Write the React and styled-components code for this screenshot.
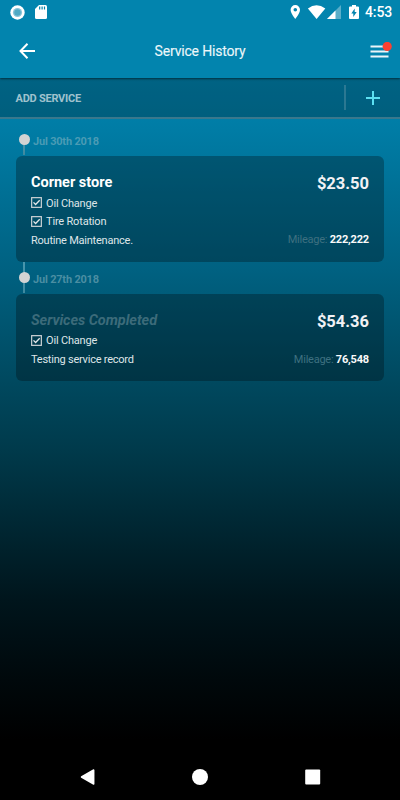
import React from "react";
import styled, { createGlobalStyle } from "styled-components";

const Global = createGlobalStyle`
  * { box-sizing: border-box; }
  body { margin: 0; background: #000; }
`;

const Screen = styled.div`
  width: 400px;
  height: 800px;
  display: flex;
  flex-direction: column;
  overflow: hidden;
  font-family: Roboto, "Liberation Sans", sans-serif;
  color: #fff;
  background: linear-gradient(180deg, #0084b0 78px, #007ca5 130px, #006181 270px, #00485e 385px, #003a4b 450px, #00212b 550px, #00151c 600px, #00080b 680px, #000 740px);
`;

const TopArea = styled.header`
  height: 78px;
  flex: none;
  background: #0284ae;
  box-shadow: 0 1px 2px rgba(0, 0, 0, 0.55);
  z-index: 1;
`;

const StatusBar = styled.div`
  height: 24px;
  display: flex;
  align-items: center;
  justify-content: space-between;
  padding: 0 8px 0 10px;
`;

const StatusGroup = styled.div`
  display: flex;
  align-items: center;
`;

const Icon = styled.svg`
  display: block;
  flex: none;
  margin-left: ${(p) => p.$gap || 0}px;
`;

const Clock = styled.span`
  font-size: 14px;
  line-height: 24px;
  font-weight: 500;
  width: 27px;
  margin-left: 6px;
  white-space: nowrap;
  letter-spacing: -0.1px;
`;

const NavBar = styled.div`
  height: 54px;
  display: grid;
  grid-template-columns: 54px 1fr 54px;
  align-items: center;
`;

const IconButton = styled.button`
  border: 0;
  padding: 0;
  background: none;
  display: flex;
  align-items: center;
  justify-content: center;
`;

const Title = styled.h1`
  margin: 0;
  text-align: center;
  font-size: 14px;
  line-height: 20px;
  font-weight: 400;
  letter-spacing: -0.18px;
  color: #edf7fa;
  -webkit-text-stroke: 0.1px #edf7fa;
`;

const AddBar = styled.div`
  height: 41px;
  flex: none;
  display: flex;
  align-items: center;
  background: rgba(0, 0, 0, 0.25);
  border-bottom: 2px solid rgba(170, 170, 170, 0.34);
  padding-left: 15.5px;
`;

const AddLabel = styled.span`
  flex: 1;
  padding-top: 1px;
  font-size: 11px;
  font-weight: 700;
  letter-spacing: -0.25px;
  color: #9fc2ce;
`;

const Divider = styled.span`
  width: 2px;
  height: 25px;
  background: rgba(170, 190, 200, 0.25);
`;

const AddButton = styled(IconButton)`
  width: 54px;
  height: 39px;
`;

const Timeline = styled.main`
  flex: 1;
  padding: 5px 16px 0;
`;

const DateRow = styled.div`
  height: 32px;
  display: flex;
  align-items: center;
  padding-left: 3px;
`;

const Rail = styled.div`
  width: 11px;
  height: 32px;
  display: flex;
  align-items: flex-start;
  padding-top: 10px;
  background: linear-gradient(#4a96ad, #3f899f) 4px ${(p) => (p.$first ? "16px" : "0")} / 2px ${(p) => (p.$first ? "15px" : "31px")} no-repeat;
`;

const Dot = styled.span`
  width: 11px;
  height: 11px;
  border-radius: 50%;
  background: #d3d3d3;
`;

const DateText = styled.time`
  margin: 3px 0 0 3px;
  font-size: 11px;
  line-height: 14px;
  font-weight: 700;
  letter-spacing: -0.2px;
  color: rgba(150, 190, 200, 0.5);
`;

const Card = styled.article`
  height: ${(p) => p.$height}px;
  display: flex;
  justify-content: space-between;
  padding: 17px 15px 13px;
  border-radius: 6px;
  background: rgba(0, 0, 0, 0.28);
`;

const Details = styled.div`
  display: flex;
  flex-direction: column;
`;

const Totals = styled(Details)`
  align-items: flex-end;
  justify-content: space-between;
`;

const Shop = styled.h2`
  margin: 0;
  height: 21px;
  font-size: 14.5px;
  line-height: 20px;
  font-weight: 700;
  font-style: ${(p) => (p.$placeholder ? "italic" : "normal")};
  letter-spacing: ${(p) => (p.$placeholder ? "-0.05px" : "0")};
  color: ${(p) => (p.$placeholder ? "#3c6b7a" : "#fff")};
`;

const Line = styled.div`
  height: 18.5px;
  flex: none;
  display: flex;
  align-items: center;
  gap: 4px;
  font-size: 11px;
  line-height: 18px;
  letter-spacing: -0.25px;
  color: #dfe5e8;
`;

const LineText = styled.span`
  padding-top: 1.5px;
  letter-spacing: ${(p) => (p.$note ? "-0.23px" : "-0.18px")};
`;

const Price = styled.strong`
  font-size: 16.5px;
  line-height: 21px;
  font-weight: 700;
  color: #f2f2f5;
`;

const Mileage = styled(Line)`
  gap: 2.5px;
  margin-bottom: ${(p) => (p.$low ? "-1px" : "-0.5px")};
  color: #3e7080;
  strong { color: #fafafa; letter-spacing: -0.18px; }
`;

const SystemNav = styled.nav`
  height: 47px;
  flex: none;
  display: flex;
  justify-content: space-between;
  align-items: center;
  padding: 0 79px 0 80px;
  background: #000;
`;

const Checkbox = () => (
  <Icon width="11" height="11" viewBox="0 0 11 11" fill="none">
    <rect x=".65" y=".65" width="9.7" height="9.7" stroke="#cbd2d5" strokeWidth="1.2" />
    <path d="M2.5 5.4 4.6 7.5 8.7 3.3" stroke="#e4e9eb" strokeWidth="1.3" />
  </Icon>
);

const records = [
  { date: "Jul 30th 2018", shop: "Corner store", services: ["Oil Change", "Tire Rotation"], note: "Routine Maintenance.", price: "$23.50", mileage: "222,222", height: 106 },
  { date: "Jul 27th 2018", services: ["Oil Change"], note: "Testing service record", price: "$54.36", mileage: "76,548", height: 87 },
];

function ServiceRecord({ record, first }) {
  return (
    <section>
      <DateRow>
        <Rail $first={first}><Dot /></Rail>
        <DateText>{record.date}</DateText>
      </DateRow>
      <Card $height={record.height}>
        <Details>
          <Shop $placeholder={!record.shop}>{record.shop || "Services Completed"}</Shop>
          {record.services.map((s) => <Line key={s}><Checkbox /><LineText>{s}</LineText></Line>)}
          <Line><LineText $note>{record.note}</LineText></Line>
        </Details>
        <Totals>
          <Price>{record.price}</Price>
          <Mileage $low={!first}>Mileage: <strong>{record.mileage}</strong></Mileage>
        </Totals>
      </Card>
    </section>
  );
}

export default function App() {
  return (
    <>
      <Global />
      <Screen>
        <TopArea>
          <StatusBar>
            <StatusGroup>
              <Icon width="15" height="15" viewBox="0 0 15 15">
                <circle cx="7.5" cy="7.5" r="7.2" fill="#fff" />
                <circle cx="7.5" cy="7.5" r="4.6" fill="#8bc5d8" />
                <circle cx="7.5" cy="7.5" r="3.2" fill="#4ea9c4" />
              </Icon>
              <Icon $gap={10} width="12" height="14" viewBox="0 0 12 14">
                <path d="M4 0h6.5Q12 0 12 1.5v11q0 1.5-1.5 1.5h-9Q0 14 0 12.5V4Z" fill="#fff" />
                <path d="M4.7 1.6v3M7.1 1.6v3M9.5 1.6v3" stroke="#0284ae" strokeWidth="1.2" />
              </Icon>
            </StatusGroup>
            <StatusGroup>
              <Icon width="10" height="14" viewBox="0 0 10 14">
                <path fillRule="evenodd" d="M5.300 0a4.700 4.700 0 0 1 4.700 4.700c0 3.600-4.700 9.300-4.700 9.300S.6 8.300.6 4.700A4.700 4.700 0 0 1 5.300 0Zm0 3a1.800 1.800 0 1 0 0 3.600 1.800 1.800 0 0 0 0-3.600Z" fill="#fff" />
              </Icon>
              <Icon $gap={7} width="19" height="14" viewBox="0 0 19 14">
                <path d="M.9 3.500Q9.500-3 18.300 3.500L9.600 14Z" fill="#fff" />
              </Icon>
              <Icon $gap={1} width="14" height="14" viewBox="0 0 14 14">
                <path d="M14 0v14H0Z" fill="#5aaec9" />
                <path d="M8.500 5.500V14H0Z" fill="#fff" />
              </Icon>
              <Icon $gap={8} width="10" height="14" viewBox="0 0 10 14">
                <path d="M3 0h4v1.500h2q1 0 1 1V13q0 1-1 1H1q-1 0-1-1V2.500q0-1 1-1h2Z" fill="#fff" />
                <path d="M5.700 3.400v3.500h2L4.300 12V8.600h-2Z" fill="#0284ae" />
              </Icon>
              <Clock>4:53</Clock>
            </StatusGroup>
          </StatusBar>
          <NavBar>
            <IconButton aria-label="Back">
              <Icon width="16" height="16" viewBox="0 0 16 16" fill="none" stroke="#fff" strokeWidth="2">
                <path d="M8.500.8 1.500 8l7 7.200M1.500 8H16" />
              </Icon>
            </IconButton>
            <Title>Service History</Title>
            <IconButton aria-label="Menu">
              <Icon $gap={16} width="22" height="18" viewBox="0 0 22 18">
                <path d="M.5 4.500h18M.5 9.500h18M.5 14.500h18" stroke="#eaf5f9" strokeWidth="2" />
                <circle cx="17.200" cy="4.400" r="4.600" fill="#fa4132" />
              </Icon>
            </IconButton>
          </NavBar>
        </TopArea>
        <AddBar>
          <AddLabel>ADD SERVICE</AddLabel>
          <Divider />
          <AddButton aria-label="Add service">
            <Icon width="14" height="14" viewBox="0 0 14 14">
              <path d="M7 0v14M0 7h14" stroke="#5ce0f2" strokeWidth="2" />
            </Icon>
          </AddButton>
        </AddBar>
        <Timeline>
          {records.map((r, i) => <ServiceRecord key={r.date} record={r} first={i === 0} />)}
        </Timeline>
        <SystemNav>
          <Icon width="15" height="16" viewBox="0 0 15 16"><path d="M13.700 1v14L1.500 8Z" fill="#fff" stroke="#fff" strokeWidth="1.500" strokeLinejoin="round" /></Icon>
          <Icon width="16" height="16" viewBox="0 0 16 16"><circle cx="8" cy="8" r="8" fill="#fff" /></Icon>
          <Icon width="16" height="16" viewBox="0 0 16 16"><rect x=".2" y=".5" width="15" height="15" rx="1" fill="#fff" /></Icon>
        </SystemNav>
      </Screen>
    </>
  );
}
